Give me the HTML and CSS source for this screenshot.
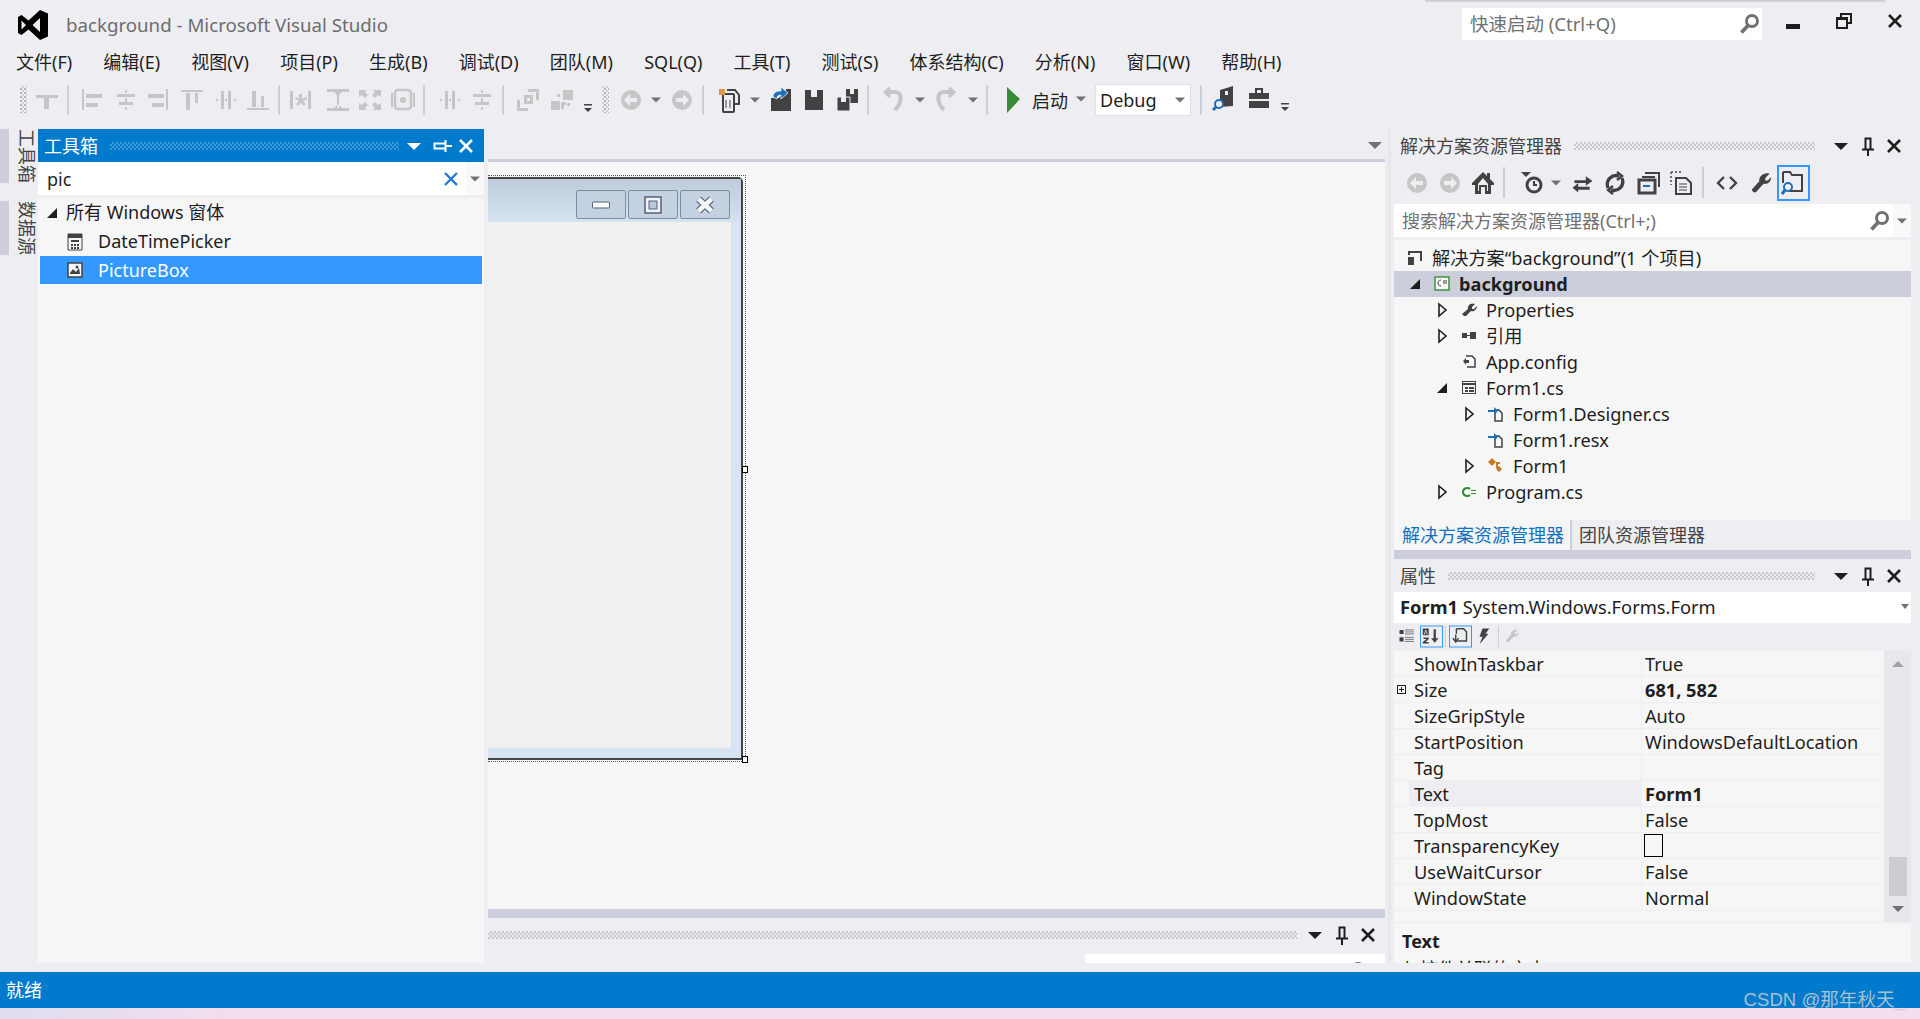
FILE: index.html
```html
<!DOCTYPE html>
<html lang="zh-CN">
<head>
    <meta charset="UTF-8">
    <title>background - Microsoft Visual Studio</title>
    <link rel="stylesheet" href="styles.css">
</head>
<body>
    <!-- shared icons, all drawn around 0,0 -->
    <svg class="defs" width="0" height="0">
        <defs>
            <pattern id="dots" width="4" height="4" patternUnits="userSpaceOnUse"><rect width="2" height="2" fill="#b4b4ba"/><rect x="2" y="2" width="2" height="2" fill="#cfcfd4"/></pattern>
            <path id="i-close" d="M-6-6L6 6M6-6L-6 6" fill="none" stroke="currentColor" stroke-width="2.6"/>
            <path id="i-drop" d="M-7-3H7L0 4Z" fill="currentColor"/>
            <path id="i-arrow" d="M-5-2.5H5L0 2.5Z" fill="#717171"/>
            <g id="i-pin" fill="none" stroke="currentColor"><path d="M-3.5-7.5H3.5M-2.5-7V3M2.5-7V3" stroke-width="2"/><path d="M-6 3.5H6" stroke-width="2"/><path d="M0 4V10" stroke-width="2"/></g>
            <g id="i-search"><circle cx="3" cy="-3" r="5.5" fill="none" stroke="#717171" stroke-width="3"/><path d="M-1 1.5L-7.5 8.5" stroke="#717171" stroke-width="3.8"/></g>

            <path id="t-cross" d="M-11-5H11V-2H2V9H-3V-2H-11Z"/>
            <path id="t-left" d="M-10-11H-8V10H-10ZM-6-6H10V-2H-6ZM-6 3H6V7H-6Z"/>
            <path id="t-center" d="M-1-10H1V-7H-1ZM-1-2H1V2H-1ZM-1 7H1V10H-1ZM-9-6H9V-3H-9ZM-7 2H7V5H-7Z"/>
            <path id="t-right" d="M8-11H10V10H8ZM-10-6H6V-2H-10ZM-6 3H6V7H-6Z"/>
            <path id="t-top" d="M-11-10H11V-8H-11ZM-6-7H-2V10H-6ZM3-7H6V3H3Z"/>
            <path id="t-mid" d="M-5-9H-2V9H-5ZM2-9H5V9H2ZM-10-1H-8V1H-10ZM-1-1H1V1H-1ZM8-1H10V1H8Z"/>
            <path id="t-bottom" d="M-11 8H11V10H-11ZM-6-9H-2V7H-6ZM3-4H6V7H3Z"/>
            <path id="t-star" d="M-10-9H-7V9H-10ZM8-9H11V9H8ZM-1-6H2V-1L6-3 7-1 3 1 6 4 4 6 1 3-2 6-4 4-1 1-5-1-4-3-1-1Z"/>
            <path id="t-ibeam" d="M-11-11H11V-8H-11ZM-11 8H11V11H-11ZM-1-8H1V8H-1ZM-4-8H4L0-4ZM-4 8H4L0 4Z"/>
            <path id="t-expand" d="M-11-10H-3L-5-8-2-5-5-2-8-5-11-3ZM11-10H3L5-8 2-5 5-2 8-5 11-3ZM-11 10H-3L-5 8-2 5-5 2-8 5-11 3ZM11 10H3L5 8 2 5 5 2 8 5 11 3Z"/>
            <g id="t-target"><path d="M-11-7V7" stroke="currentColor" stroke-width="2"/><path d="M11-7V7" stroke="currentColor" stroke-width="2"/><rect x="-8" y="-10" width="16" height="19" rx="3" fill="none" stroke="currentColor" stroke-width="2.5"/><circle r="3" fill="currentColor"/></g>
            <path id="t-front" d="M-4-5H5V4H-4ZM-1-2V1H2V-2ZM-11 0H-8V8H0V11H-11ZM0-11H11V0H8V-8H0Z" fill-rule="evenodd"/>
            <path id="t-back" d="M-11 1H-2V10H-11ZM1-10H11V0H1ZM-5-3H-2V-6H-5ZM5 3H8V6H5Z M1 2H4V5H2V9H-1V2Z"/>
            <g id="t-over"><path d="M-4-4H4V-2.500H-4Z"/><path d="M-4 0H4L0 4Z"/></g>
            <g id="t-circle-back"><circle r="10"/><path d="M6-2V2H-1V6L-7 0-1-6V-2Z" fill="#eeeef2"/></g>
            <g id="t-circle-next"><circle r="10"/><path d="M-6-2V2H1V6L7 0 1-6V-2Z" fill="#eeeef2"/></g>

            <g id="t-new"><rect x="-6" y="-6" width="11" height="18" rx="1" fill="none" stroke="#424242" stroke-width="2"/><path d="M-3 0V8M1 0V8" stroke="#424242"/><path d="M-2-10H6L10-5V4H6" fill="none" stroke="#424242" stroke-width="2"/><path d="M-10-11h6v6h-6z" fill="#d79a4a"/></g>
            <g id="t-open"><path d="M-10-2H-2L0-5H10V11H-10Z" fill="#424242"/><path d="M5-11H10V-5H5Z" fill="#424242"/><path d="M-8-3C-8-8-4-9 0-9V-13L7-7 0-1V-5C-3-5-4-4-4-1Z" fill="#1e6fb8" stroke="#eeeef2" stroke-width=".8"/></g>
            <g id="t-save"><path d="M-9-10H9V10H-9Z" fill="#424242"/><path d="M-3-10H3V-3H-3Z" fill="#eeeef2"/></g>
            <g id="t-saveall"><path d="M-1-11H11V3H-1Z" fill="#424242"/><path d="M3-11H7V-6H3Z" fill="#eeeef2"/><path d="M-10-3H3V11H-10Z" fill="#424242" stroke="#eeeef2"/><path d="M-6-3H-1V2H-6Z" fill="#eeeef2"/></g>
            <g id="t-undo" fill="none" stroke="currentColor" stroke-width="4"><path d="M-7-8H2C10-8 9 3 2 10"/><path d="M-3-12L-8-8-3-3" stroke-width="3"/></g>
            <g id="t-redo" fill="none" stroke="currentColor" stroke-width="4"><path d="M7-8H-2C-10-8-9 3-2 10"/><path d="M3-12L8-8 3-3" stroke-width="3"/></g>
            <g id="t-find"><path d="M-5-8L8-12V8L-5 9Z" fill="#424242"/><path d="M0-7H3V-3H0Z" fill="#eeeef2"/><circle cx="-6" cy="6" r="4" fill="#eeeef2" stroke="#1e6fb8" stroke-width="2"/><path d="M-9 9L-12 12" stroke="#1e6fb8" stroke-width="3"/></g>
            <g id="t-box"><path d="M-10-5H10V10H-10Z" fill="#424242"/><path d="M-4-10H4V-5H2V-8H-2V-5H-4Z" fill="#424242"/><path d="M-10 1H10V3H-10Z" fill="#eeeef2"/></g>

            <path id="s-home" d="M0-11L-11 0V2H-8V11H-2V4H2V11H8V2H11V0L7-4V-10H4V-7Z M-5 1L0-5 5 1V8H4V2H-4V8H-5Z" fill-rule="evenodd"/>
            <g id="s-history"><path d="M-12-11H-2L-7-6Z"/><circle cx="1" cy="2" r="7" fill="none" stroke="#424242" stroke-width="3"/><path d="M1-2V2H4" fill="none" stroke="#424242" stroke-width="2"/></g>
            <path id="s-sync" d="M-8-3H4V-7L11-2 4 3V0H-8ZM8 1V4H-4V0L-10 5-4 10V7H8Z" transform="scale(.95)"/>
            <g id="s-refresh" fill="none" stroke="#424242" stroke-width="3.4"><path d="M-7 5C-10-3-3-9 4-7"/><path d="M7-5C10 3 3 9-4 7"/><path d="M2-11L7-7 2-3" stroke-width="2.4"/><path d="M-2 11L-7 7-2 3" stroke-width="2.4"/></g>
            <g id="s-collapse"><path d="M-4-10H10V4" fill="none" stroke="#424242" stroke-width="2"/><path d="M-7-6H6" fill="none" stroke="#424242" stroke-width="2"/><path d="M-10-3H6V10H-10Z" fill="none" stroke="#424242" stroke-width="3"/><path d="M-6 3H1" stroke="#1e6fb8" stroke-width="2"/></g>
            <g id="s-copy"><path d="M-10-11H2M-10-11V2" fill="none" stroke="#717171" stroke-dasharray="2 2" stroke-width="2"/><path d="M-5-5H5L10 0V11H-5Z" fill="none" stroke="#424242" stroke-width="2"/><path d="M-2 1H6M-2 4H6M-2 7H6" stroke="#424242"/></g>
            <path id="s-code" d="M-3-6L-9 0-3 6M3-6L9 0 3 6" fill="none" stroke="#424242" stroke-width="2.4"/>
            <path id="s-wrench" d="M10-11L5-6V-3H8L12-7C12-1 7 2 3 1L-6 11H-9L-11 8-2-2C-3-7 3-13 10-11Z"/>
            <g id="s-preview"><path d="M-10-11H-3L-1-8H9V8H-4" fill="none" stroke="#424242" stroke-width="2"/><path d="M-10-11V0" stroke="#424242" stroke-width="2"/><circle cx="-5" cy="4" r="4" fill="#f2f2f5" stroke="#1e6fb8" stroke-width="2"/><path d="M-8 7L-11 11" stroke="#1e6fb8" stroke-width="3"/></g>
            <g id="p-cat"><path d="M-11-9H-5V-3H-11ZM-11 2H-5V8H-11Z"/><path d="M-3-9H10M-3-6H10M-3-3H10M-3 2H10M-3 5H10M-3 8H10" stroke="#424242"/></g>
            <g id="p-az"><path d="M-11-10H-3V-1H-11Z"/><path d="M-9-2L-7-8-5-2" fill="none" stroke="#eeeef2"/><path d="M-10 2H-3V4L-7 8H-3V10H-11V8L-6 4H-10Z"/><path d="M5-9V6" stroke="#424242" stroke-width="3"/><path d="M0 3H10L5 9Z"/></g>
            <g id="p-page"><path d="M-5-10H5L9-6V7H-4" fill="none" stroke="#424242" stroke-width="2"/><path d="M-5-10V-3" stroke="#424242" stroke-width="2"/><path d="M-6-2V9" stroke="#424242" stroke-width="2"/><path d="M-10 3L-6 8-2 3" fill="none" stroke="#424242" stroke-width="2"/></g>
            <path id="p-bolt" d="M-2-10H7L2-3H6L-6 11-2 1H-6Z"/>

            <path id="n-solution" d="M-7-7H7V3H5V-5H-5V-3H-7Z M-7-1H-1V7H-7Z" fill-rule="evenodd"/>
            <path id="n-wrench" d="M6-6L3-3V-1H5L8-4C8 0 4 2 2 1L-3 6H-5L-7 4-1-1C-2-4 2-8 6-6Z"/>
            <path id="n-ref" d="M-7-3H-2V2H-7ZM1-4H7V3H1ZM-2-1H1V0H-2Z"/>
            <g id="n-config"><path d="M-3-6H3L6-3V5H-2" fill="none" stroke="#424242" stroke-width="1.5"/><path d="M-6-1L-3-4V-2H0V1H-3V3Z" fill="#424242"/></g>
            <g id="n-form"><rect x="-6.5" y="-6.5" width="13" height="12" fill="none" stroke="#424242"/><path d="M-6-5H6V-3H-6ZM-4-1H-1V1H-4ZM0-1H5V1H0ZM-4 2H-1V4H-4ZM0 2H5V4H0Z" fill="#424242"/></g>
            <g id="n-linked"><path d="M-1-4H3L6-1V7H-1Z" fill="none" stroke="#424242" stroke-width="1.5"/><path d="M-8-4H-2V-7L2-3-2 1V-2H-8Z" fill="#1e6fb8"/></g>
            <g id="n-class" fill="#c77a25"><path d="M-8-4L-4-8 0-4-4 0Z"/><path d="M0 3L3 0 6 3 3 6ZM0-4H4V-2H2V2H0Z"/></g>
            <g id="n-cs"><path d="M1-3C-1-5-6-4-6 0-6 4-1 5 1 3" fill="none" stroke="#388a34" stroke-width="2"/><path d="M2-2H7V-1H2ZM2 1H7V2H2Z" fill="#388a34"/></g>
            <path id="n-open" d="M5-5V5H-5Z" fill="#1e1e1e"/>
            <path id="n-closed" d="M-3-6L4 0-3 6Z" fill="none" stroke="#1e1e1e" stroke-width="1.6"/>
        </defs>
    </svg>

    <div class="shadow-top"></div>

    <header class="titlebar">
        <svg class="logo" width="30" height="30" viewBox="0 0 30 30"><path fill-rule="evenodd" d="M22 0L30 3.5V26.5L22 30 10.5 19.5 3.5 25 0 23V7L3.5 5 10.5 10.5ZM3.5 10.5V19.5L8 15ZM22 8L14.5 15 22 22Z"/></svg>
        <span class="app-title">background - Microsoft Visual Studio</span>
        <div class="quick">
            <span>快速启动 (Ctrl+Q)</span>
            <svg width="20" height="20" viewBox="-10 -10 20 20"><use href="#i-search"/></svg>
        </div>
        <div class="winbtns">
            <svg class="w-min" width="14" height="5"><rect width="14" height="5" fill="#1e1e1e" y="0"/></svg>
            <svg class="w-max" width="16" height="16" fill="none" stroke="#1e1e1e" stroke-width="2"><path d="M5 4V1H15V10H12"/><rect x="1" y="5" width="10" height="10"/><path d="M1 6H11"/></svg>
            <svg class="w-close" width="14" height="14" viewBox="-7 -7 14 14" color="#1e1e1e"><use href="#i-close"/></svg>
        </div>
    </header>

    <nav class="menubar">
        <span>文件(F)</span><span>编辑(E)</span><span>视图(V)</span><span>项目(P)</span><span>生成(B)</span><span>调试(D)</span><span>团队(M)</span><span>SQL(Q)</span><span>工具(T)</span><span>测试(S)</span><span>体系结构(C)</span><span>分析(N)</span><span>窗口(W)</span><span>帮助(H)</span>
    </nav>

    <div class="toolbar">
        <svg width="1024" height="40" class="tool-icons">
            <rect x="20" y="6" width="7" height="27" fill="url(#dots)"/>
            <g fill="#c6c6c6" color="#c6c6c6" transform="translate(0,20)">
                <use href="#t-cross" x="47"/>
                <use href="#t-left" x="92"/><use href="#t-center" x="126"/><use href="#t-right" x="158"/>
                <use href="#t-top" x="192"/><use href="#t-mid" x="226"/><use href="#t-bottom" x="258"/>
                <use href="#t-star" x="300"/><use href="#t-ibeam" x="338"/><use href="#t-expand" x="370"/><use href="#t-target" x="403"/>
                <use href="#t-mid" x="450"/><use href="#t-center" x="482"/>
                <use href="#t-front" x="528"/><use href="#t-back" x="562"/>
                <use href="#t-circle-back" x="631"/><use href="#i-arrow" x="656"/><use href="#t-circle-next" x="682"/>
                <use href="#t-undo" x="893"/><use href="#i-arrow" x="920"/><use href="#t-redo" x="946"/><use href="#i-arrow" x="973"/>
            </g>
            <g fill="#cccedb">
                <rect x="67" y="5" width="2" height="30"/><rect x="278" y="5" width="2" height="30"/><rect x="423" y="5" width="2" height="30"/><rect x="502" y="5" width="2" height="30"/>
                <rect x="702" y="5" width="2" height="30"/><rect x="867" y="5" width="2" height="30"/><rect x="986" y="5" width="2" height="30"/>
            </g>
            <use href="#t-over" x="588" y="28" fill="#424242"/>
            <rect x="602" y="6" width="7" height="27" fill="url(#dots)"/>
            <g transform="translate(0,20)">
                <use href="#t-new" x="729"/><use href="#i-arrow" x="755"/><use href="#t-open" x="781"/><use href="#t-save" x="814"/><use href="#t-saveall" x="847"/>
            </g>
            <path d="M1007 7L1020 19 1007 33Z" fill="#388a34"/>
        </svg>
        <span class="start">启动</span>
        <svg class="start-arrow" width="12" height="8" viewBox="-6 -4 12 8"><use href="#i-arrow"/></svg>
        <div class="combo">Debug<svg width="12" height="8" viewBox="-6 -4 12 8"><use href="#i-arrow"/></svg></div>
        <svg width="100" height="40" class="tool-icons-end">
            <rect x="4" y="5" width="2" height="30" fill="#cccedb"/>
            <use href="#t-find" x="29" y="18"/><use href="#t-box" x="63" y="18"/>
            <use href="#t-over" x="89" y="27" fill="#424242"/>
        </svg>
    </div>

    <main class="workspace">
        <div class="vtabs">
            <div class="vtab">工具箱</div>
            <div class="vtab">数据源</div>
        </div>

        <section class="toolbox">
            <div class="panel-title active">
                <span>工具箱</span>
                <div class="grip grip-blue"></div>
                <svg width="70" height="20" viewBox="0 -10 70 20" color="#fff"><use href="#i-drop" x="7"/><g transform="translate(35,0) rotate(-90)"><use href="#i-pin"/></g><use href="#i-close" x="59"/></svg>
            </div>
            <div class="tb-search">
                <span class="tb-query">pic</span>
                <svg width="16" height="16" viewBox="-8 -8 16 16"><path d="M-6-6L6 6M6-6L-6 6" stroke="#1e7bd0" stroke-width="2.4"/></svg>
                <div class="tb-drop"><svg width="12" height="8" viewBox="-6 -4 12 8"><use href="#i-arrow"/></svg></div>
            </div>
            <div class="tb-list">
                <div class="tb-row tb-group">
                    <svg width="18" height="18" viewBox="-9 -9 18 18"><use href="#n-open"/></svg>
                    <span>所有 Windows 窗体</span>
                </div>
                <div class="tb-row tb-item">
                    <svg width="16" height="18" viewBox="0 0 16 18"><path d="M1 1H15V17H1Z" fill="#f6f6f6" stroke="#424242"/><path d="M1 1H15V5H1ZM4 7H12V9H4ZM4 11H6V13H4ZM7 11H9V13H7ZM10 11H12V13H10ZM4 14H6V16H4ZM7 14H9V16H7ZM10 14H12V16H10Z" fill="#424242"/></svg>
                    <span>DateTimePicker</span>
                </div>
                <div class="tb-row tb-item selected">
                    <svg width="16" height="16" viewBox="0 0 16 16"><path d="M1 1H15V15H1Z" fill="#f6f6f6" stroke="#424242" stroke-width="1.5"/><path d="M3 11L6 7 9 10 12 6 13 12H3Z" fill="#424242"/><circle cx="10" cy="5" r="1.5" fill="#424242"/></svg>
                    <span>PictureBox</span>
                </div>
            </div>
        </section>

        <section class="center">
            <div class="tabstrip">
                <svg width="14" height="8" viewBox="-7 -4 14 8" color="#717171"><use href="#i-drop"/></svg>
            </div>
            <div class="designer">
                <div class="form-sel">
                    <div class="form">
                        <div class="form-caption">
                            <div class="form-btn"><svg width="18" height="8"><rect x=".5" y="1" width="17" height="6" rx="1" fill="#f8f8f8" stroke="#55607a"/></svg></div>
                            <div class="form-btn"><svg width="18" height="18"><rect x="1" y="1" width="16" height="16" fill="#f4f4f4" stroke="#55607a" stroke-width="1.5"/><rect x="5" y="5" width="8" height="8" fill="#b9c8d8" stroke="#55607a"/></svg></div>
                            <div class="form-btn"><svg width="20" height="18" viewBox="-10 -9 20 18"><path d="M-6.500-6L6.500 6M6.500-6L-6.500 6" stroke="#55607a" stroke-width="7"/><path d="M-6.500-6L6.500 6M6.500-6L-6.500 6" stroke="#f6f6f6" stroke-width="4.500"/></svg></div>
                        </div>
                        <div class="form-client"></div>
                    </div>
                    <div class="handle handle-right"></div>
                    <div class="handle handle-corner"></div>
                </div>
            </div>
            <div class="splitter"></div>
            <div class="output">
                <div class="output-title">
                    <div class="grip"></div>
                    <svg width="88" height="22" viewBox="0 -11 88 22" color="#1e1e1e"><use href="#i-drop" x="18"/><use href="#i-pin" x="45"/><use href="#i-close" x="71"/></svg>
                </div>
                <div class="output-search">
                    <span>搜索错误列表</span>
                    <svg width="20" height="20" viewBox="-10 -10 20 20"><use href="#i-search"/></svg>
                </div>
            </div>
        </section>

        <aside class="side">
            <div class="panel-title">
                <span>解决方案资源管理器</span>
                <div class="grip"></div>
                <svg width="88" height="22" viewBox="0 -11 88 22" color="#1e1e1e"><use href="#i-drop" x="18"/><use href="#i-pin" x="45"/><use href="#i-close" x="71"/></svg>
            </div>
            <svg class="se-tools" width="517" height="42">
                <g transform="translate(0,21)" fill="#424242">
                    <g fill="#c6c6c6"><use href="#t-circle-back" x="23"/><use href="#t-circle-next" x="56"/></g>
                    <use href="#s-home" x="89"/>
                    <use href="#s-history" x="139"/><use href="#i-arrow" x="162"/>
                    <use href="#s-sync" x="188"/><use href="#s-refresh" x="221"/><use href="#s-collapse" x="255"/><use href="#s-copy" x="287"/>
                    <use href="#s-code" x="333"/><use href="#s-wrench" transform="translate(367,0) scale(.85)"/>
                    <use href="#s-preview" x="399"/>
                </g>
                <rect x="109" y="5" width="2" height="31" fill="#cccedb"/>
                <rect x="308" y="5" width="2" height="31" fill="#cccedb"/>
                <rect x="384" y="4" width="31" height="34" fill="none" stroke="#3399ff" stroke-width="2"/>
            </svg>
            <div class="se-search">
                <span>搜索解决方案资源管理器(Ctrl+;)</span>
                <svg width="20" height="20" viewBox="-10 -10 20 20"><use href="#i-search"/></svg>
                <div class="se-drop"><svg width="12" height="8" viewBox="-6 -4 12 8"><use href="#i-arrow"/></svg></div>
            </div>
            <div class="tree">
                <div class="node lv0"><svg width="34" height="18" viewBox="-17 -9 34 18" fill="#424242"><use href="#n-solution"/></svg><span>解决方案“background”(1 个项目)</span></div>
                <div class="node lv1 current">
                    <svg width="20" height="18" viewBox="-10 -9 20 18"><use href="#n-open"/></svg>
                    <svg width="34" height="18" viewBox="-17 -9 34 18"><rect x="-7" y="-7" width="14" height="13" fill="#f6f6f6" stroke="#388a34" stroke-width="1.4"/><path d="M-1-4C-5-4-5 2-1 2M1-3H5M1-1H5" fill="none" stroke="#424242"/></svg>
                    <span>background</span>
                </div>
                <div class="node lv2"><svg width="20" height="18" viewBox="-10 -9 20 18"><use href="#n-closed"/></svg><svg width="34" height="18" viewBox="-17 -9 34 18" fill="#424242"><use href="#n-wrench"/></svg><span>Properties</span></div>
                <div class="node lv2"><svg width="20" height="18" viewBox="-10 -9 20 18"><use href="#n-closed"/></svg><svg width="34" height="18" viewBox="-17 -9 34 18" fill="#424242"><use href="#n-ref"/></svg><span>引用</span></div>
                <div class="node lv2 leaf"><svg width="34" height="18" viewBox="-17 -9 34 18"><use href="#n-config"/></svg><span>App.config</span></div>
                <div class="node lv2"><svg width="20" height="18" viewBox="-10 -9 20 18"><use href="#n-open"/></svg><svg width="34" height="18" viewBox="-17 -9 34 18"><use href="#n-form"/></svg><span>Form1.cs</span></div>
                <div class="node lv3"><svg width="20" height="18" viewBox="-10 -9 20 18"><use href="#n-closed"/></svg><svg width="34" height="18" viewBox="-17 -9 34 18"><use href="#n-linked"/></svg><span>Form1.Designer.cs</span></div>
                <div class="node lv3 leaf"><svg width="34" height="18" viewBox="-17 -9 34 18"><use href="#n-linked"/></svg><span>Form1.resx</span></div>
                <div class="node lv3"><svg width="20" height="18" viewBox="-10 -9 20 18"><use href="#n-closed"/></svg><svg width="34" height="18" viewBox="-17 -9 34 18"><use href="#n-class"/></svg><span>Form1</span></div>
                <div class="node lv2"><svg width="20" height="18" viewBox="-10 -9 20 18"><use href="#n-closed"/></svg><svg width="34" height="18" viewBox="-17 -9 34 18"><use href="#n-cs"/></svg><span>Program.cs</span></div>
            </div>
            <div class="side-tabs">
                <span class="side-tab on">解决方案资源管理器</span>
                <span class="side-tab">团队资源管理器</span>
            </div>
            <div class="side-split"></div>
            <div class="panel-title">
                <span>属性</span>
                <div class="grip"></div>
                <svg width="88" height="22" viewBox="0 -11 88 22" color="#1e1e1e"><use href="#i-drop" x="18"/><use href="#i-pin" x="45"/><use href="#i-close" x="71"/></svg>
            </div>
            <div class="obj-combo">
                <b>Form1</b>&nbsp;<span>System.Windows.Forms.Form</span>
                <svg width="8" height="5" viewBox="-4 -2.5 8 5"><path d="M-4-2.5H4L0 2.5Z" fill="#717171"/></svg>
            </div>
            <svg class="prop-tools" width="517" height="28">
                <g transform="translate(0,13)" fill="#424242">
                    <use href="#p-cat" transform="translate(13,0) scale(.68)"/><use href="#p-az" transform="translate(37,0) scale(.75)"/><use href="#p-page" transform="translate(66,0) scale(.72)"/><use href="#p-bolt" transform="translate(90,0) scale(.75)"/>
                    <use href="#s-wrench" transform="translate(118,0) scale(.55)" fill="#c6c6c6"/>
                </g>
                <rect x="26.500" y="3" width="22" height="21" fill="none" stroke="#3399ff"/>
                <rect x="55.500" y="3" width="22" height="21" fill="none" stroke="#3399ff"/>
                <rect x="51" y="3" width="1" height="21" fill="#cccedb"/>
                <rect x="104" y="3" width="1" height="21" fill="#cccedb"/>
            </svg>
            <div class="grid-wrap">
                <div class="prop-grid">
                    <div class="prop"><span class="p-gutter"></span><span class="p-name">ShowInTaskbar</span><span class="p-val">True</span></div>
                    <div class="prop"><span class="p-gutter"><i class="plus"></i></span><span class="p-name">Size</span><span class="p-val strong">681, 582</span></div>
                    <div class="prop"><span class="p-gutter"></span><span class="p-name">SizeGripStyle</span><span class="p-val">Auto</span></div>
                    <div class="prop"><span class="p-gutter"></span><span class="p-name">StartPosition</span><span class="p-val">WindowsDefaultLocation</span></div>
                    <div class="prop"><span class="p-gutter"></span><span class="p-name">Tag</span><span class="p-val"></span></div>
                    <div class="prop"><span class="p-gutter"></span><span class="p-name picked">Text</span><span class="p-val strong">Form1</span></div>
                    <div class="prop"><span class="p-gutter"></span><span class="p-name">TopMost</span><span class="p-val">False</span></div>
                    <div class="prop"><span class="p-gutter"></span><span class="p-name">TransparencyKey</span><span class="p-val"><i class="swatch"></i></span></div>
                    <div class="prop"><span class="p-gutter"></span><span class="p-name">UseWaitCursor</span><span class="p-val">False</span></div>
                    <div class="prop"><span class="p-gutter"></span><span class="p-name">WindowState</span><span class="p-val">Normal</span></div>
                </div>
                <div class="vscroll">
                    <svg width="12" height="8" viewBox="-6 -4 12 8"><path d="M-6 3H6L0-3Z" fill="#a0a0a8"/></svg>
                    <div class="thumb"></div>
                    <svg width="12" height="8" viewBox="-6 -4 12 8"><path d="M-6-3H6L0 3Z" fill="#717171"/></svg>
                </div>
            </div>
            <div class="desc">
                <b>Text</b>
                <p>与控件关联的文本。</p>
            </div>
        </aside>
    </main>

    <footer class="statusbar">就绪</footer>
    <div class="desktop-strip"></div>
    <div class="watermark">CSDN @那年秋天_</div>
</body>
</html>
```

FILE: styles.css
```css
html, body {
    margin: 0;
    padding: 0;
    height: 100%;
    overflow: hidden;
}

body {
    position: relative;
    display: flex;
    flex-direction: column;
    background-color: #EEEEF2;
    color: #1E1E1E;
    font-family: "Noto Sans", "Noto Sans CJK SC", sans-serif;
    font-size: 18px;
    line-height: 24px;
}

svg {
    display: block;
    flex: none;
}

.defs {
    position: absolute;
}

.shadow-top {
    position: absolute;
    left: 1425px;
    top: 0;
    width: 460px;
    height: 3px;
    background: linear-gradient(#C4C4C8, #EEEEF2);
}

/* title bar */
.titlebar {
    display: flex;
    align-items: center;
    height: 50px;
    padding-left: 18px;
    box-sizing: border-box;
}

.logo {
    margin-right: 18px;
}

.app-title {
    color: #6D6D6D;
    font-size: 18.7px;
}

.quick {
    display: flex;
    align-items: center;
    justify-content: space-between;
    box-sizing: border-box;
    width: 300px;
    height: 32px;
    margin-left: auto;
    margin-bottom: 2px;
    padding: 0 3px 0 8px;
    background-color: #FFFFFF;
    color: #717171;
    font-size: 18.5px;
}

.winbtns {
    display: flex;
    align-items: center;
    margin: 0 18px 0 24px;
    gap: 36px;
}

.w-min {
    margin-top: 3px;
}

.w-max {
    margin-top: -8px;
}

.w-close {
    margin-top: -9px;
}

/* menu */
.menubar {
    display: flex;
    gap: 31.2px;
    height: 28px;
    padding-left: 16px;
    line-height: 24px;
}

/* main toolbar */
.toolbar {
    display: flex;
    align-items: flex-start;
    height: 51px;
    padding-top: 2px;
    box-sizing: border-box;
}

.start {
    margin: 9px 0 0 8px;
}

.start-arrow {
    margin: 15px 0 0 7px;
}

.combo {
    display: flex;
    align-items: center;
    justify-content: space-between;
    box-sizing: border-box;
    width: 96px;
    height: 32px;
    margin: 4px 0 0 8px;
    padding: 0 4px;
    background-color: #FFFFFF;
    border: 1px solid #E0E0E8;
}

.tool-icons-end {
    margin-left: 5px;
}

/* workspace */
.workspace {
    flex: 1;
    display: flex;
    min-height: 0;
    padding-bottom: 9px;
    box-sizing: border-box;
}

.vtabs {
    width: 38px;
    display: flex;
    flex-direction: column;
    gap: 18px;
}

.vtab {
    box-sizing: border-box;
    width: 38px;
    height: 54px;
    border-left: 9px solid #CCCEDB;
    padding-left: 3px;
    writing-mode: vertical-rl;
    text-orientation: sideways;
    color: #444444;
    line-height: 22px;
}

.toolbox {
    width: 446px;
    display: flex;
    flex-direction: column;
}

.panel-title {
    display: flex;
    align-items: center;
    height: 33px;
    flex: none;
    padding-left: 6px;
    color: #444444;
}

.panel-title.active {
    background-color: #007ACC;
    color: #FFFFFF;
    padding-right: 7px;
}

.grip {
    flex: 1;
    height: 8px;
    margin-left: 12px;
    background: conic-gradient(#C8C8CE 25%, transparent 0 50%, #C8C8CE 0 75%, transparent 0) 0 0 / 4px 4px;
}

.grip-blue {
    background: conic-gradient(#3F9AD8 25%, transparent 0 50%, #3F9AD8 0 75%, transparent 0) 0 0 / 4px 4px;
}

.panel-title .grip {
    margin-right: 8px;
}

.tb-search {
    display: flex;
    align-items: center;
    height: 33px;
    flex: none;
    padding-left: 9px;
    background-color: #FFFFFF;
}

.tb-query {
    flex: 1;
}

.tb-drop {
    display: flex;
    align-items: center;
    justify-content: center;
    width: 18px;
    height: 33px;
    margin-left: 7px;
    background-color: #F9F9F9;
}

.tb-list {
    flex: 1;
    margin-top: 3px;
    background-color: #F6F6F6;
}

.tb-row {
    display: flex;
    align-items: center;
    height: 29px;
}

.tb-row span {
    margin-top: -2px;
}

.tb-item.selected span {
    margin-top: 0;
}

.tb-group {
    padding-left: 5px;
}

.tb-group span {
    margin-left: 5px;
}

.tb-item {
    margin: 0 2px;
    padding-left: 27px;
}

.tb-item span {
    margin-left: 15px;
}

.tb-item.selected {
    height: 28px;
    background-color: #3399FF;
    color: #FFFFFF;
}

.center {
    width: 897px;
    margin-left: 4px;
    display: flex;
    flex-direction: column;
}

.tabstrip {
    flex: none;
    display: flex;
    justify-content: flex-end;
    align-items: flex-end;
    box-sizing: border-box;
    height: 33px;
    padding: 0 3px 10px 0;
    border-bottom: 3px solid #CCCEDB;
}

.designer {
    flex: 1;
    background-color: #F6F6F6;
    padding-top: 13px;
    overflow: hidden;
}

.form-sel {
    position: relative;
    box-sizing: border-box;
    width: 258px;
    height: 587px;
    padding: 1px 2px 1px 0;
    border: 1px dotted #555555;
    border-left: none;
}

.form {
    box-sizing: border-box;
    height: 100%;
    display: flex;
    flex-direction: column;
    border: 2px solid #444444;
    border-left: none;
    border-top-right-radius: 5px;
    background-color: #D7E4F2;
}

.form-caption {
    flex: none;
    display: flex;
    justify-content: flex-end;
    gap: 2px;
    box-sizing: border-box;
    height: 43px;
    padding: 11px 11px 0 0;
    background: linear-gradient(#BECCDA, #D5E3F1);
}

.form-btn {
    box-sizing: border-box;
    width: 50px;
    height: 29px;
    display: flex;
    align-items: center;
    justify-content: center;
    border: 1px solid #7F8CA3;
    border-radius: 2px;
    background-color: #C3D1E0;
}

.form-client {
    flex: 1;
    margin: 0 10px 10px 0;
    background-color: #F0F0F0;
}

.handle {
    position: absolute;
    box-sizing: border-box;
    width: 6px;
    height: 7px;
    background-color: #FFFFFF;
    border: 1px solid #000000;
    right: -3px;
}

.handle-right {
    top: 290px;
}

.handle-corner {
    bottom: -2px;
}

.splitter {
    flex: none;
    height: 9px;
    background-color: #CCCEDB;
}

.output {
    flex: none;
    height: 45px;
}

.output-title {
    display: flex;
    align-items: center;
    height: 33px;
    margin-bottom: 3px;
}

.output-title .grip {
    margin-left: 0;
}

.output-search {
    display: flex;
    justify-content: space-between;
    box-sizing: border-box;
    width: 300px;
    height: 9px;
    margin-left: auto;
    padding: 8px 20px 0 9px;
    overflow: hidden;
    background-color: #FFFFFF;
    color: #717171;
}

.side {
    width: 517px;
    margin-left: 3px;
    padding-left: 3px;
    border-left: 3px solid #E6E7ED;
    display: flex;
    flex-direction: column;
}

.se-tools, .prop-tools {
    flex: none;
}

.se-search {
    display: flex;
    align-items: center;
    height: 33px;
    flex: none;
    padding-left: 8px;
    background-color: #FFFFFF;
    color: #717171;
}

.se-search span {
    flex: 1;
}

.se-drop {
    display: flex;
    align-items: center;
    justify-content: center;
    width: 18px;
    height: 33px;
    margin-left: 4px;
    background-color: #F9F9F9;
}

.tree {
    flex: none;
    height: 280px;
    margin-top: 3px;
    padding-top: 5px;
    box-sizing: border-box;
    background-color: #F6F6F6;
    font-size: 18.2px;
}

.node {
    display: flex;
    align-items: center;
    height: 26px;
}

.lv0 {
    padding-left: 4px;
}

.lv1 {
    padding-left: 11px;
}

.lv2 {
    padding-left: 38px;
}

.lv3 {
    padding-left: 65px;
}

.leaf {
    margin-left: 20px;
}

.current {
    background-color: #CCCEDB;
    font-weight: 700;
}

.side-tabs {
    flex: none;
    display: flex;
    height: 30px;
}

.side-tab {
    padding: 0 7px;
    line-height: 30px;
    color: #444444;
}

.side-tab.on {
    padding: 0 6px 0 8px;
    background-color: #F6F6F6;
    border-right: 2px solid #CCCEDB;
    color: #0E70C0;
}

.side-split {
    flex: none;
    height: 9px;
    background-color: #CCCEDB;
}

.obj-combo {
    flex: none;
    display: flex;
    align-items: center;
    height: 31px;
    padding: 0 2px 2px 6px;
    box-sizing: border-box;
    background-color: #FFFFFF;
    font-size: 18.3px;
}

.obj-combo span {
    flex: 1;
}

.grid-wrap {
    flex: 1;
    display: flex;
    min-height: 0;
}

.prop-grid {
    flex: 1;
    background-color: #F6F6F6;
    font-size: 18.2px;
}

.prop {
    display: flex;
    box-sizing: border-box;
    height: 26px;
    border-bottom: 1px solid #EEEEF2;
    line-height: 26px;
}

.p-gutter {
    width: 15px;
    display: flex;
    align-items: center;
    justify-content: center;
    background-color: #F6F6F6;
}

.p-name {
    box-sizing: border-box;
    width: 233px;
    padding-left: 5px;
    border-right: 1px solid #EEEEF2;
}

.p-name.picked {
    background-color: #EEEEF2;
}

.p-val {
    flex: 1;
    padding-left: 3px;
}

.strong {
    font-weight: 700;
}

.plus {
    display: block;
    width: 9px;
    height: 9px;
    box-sizing: border-box;
    border: 1px solid #1E1E1E;
    background: linear-gradient(#1E1E1E, #1E1E1E) center / 5px 1px no-repeat, linear-gradient(#1E1E1E, #1E1E1E) center / 1px 5px no-repeat;
}

.swatch {
    display: block;
    box-sizing: border-box;
    width: 19px;
    height: 23px;
    margin-top: 1px;
    margin-left: -1px;
    border: 1px solid #000000;
}

.vscroll {
    flex: none;
    width: 27px;
    box-sizing: border-box;
    padding: 9px 0 9px 8px;
    display: flex;
    flex-direction: column;
    background-color: #E8E8EC;
}

.thumb {
    width: 18px;
    height: 39px;
    margin: auto 0 9px -3px;
    background-color: #CCCCD2;
}

.desc {
    flex: none;
    height: 40px;
    margin-top: 1px;
    padding: 6px 8px 0;
    box-sizing: border-box;
    background-color: #F6F6F6;
    overflow: hidden;
}

.desc p {
    margin: 4px 0 0;
}

.statusbar {
    flex: none;
    height: 36px;
    padding-left: 6px;
    background-color: #007ACC;
    color: #FFFFFF;
    line-height: 36px;
}

.desktop-strip {
    flex: none;
    height: 11px;
    background: linear-gradient(90deg, #DEDEEE, #F3DDEE 260px);
}

.watermark {
    position: absolute;
    right: 15px;
    bottom: 7px;
    font-family: "Liberation Sans", "Noto Sans CJK SC", sans-serif;
    font-size: 18.6px;
    color: rgba(200, 205, 210, 0.85);
}
```
